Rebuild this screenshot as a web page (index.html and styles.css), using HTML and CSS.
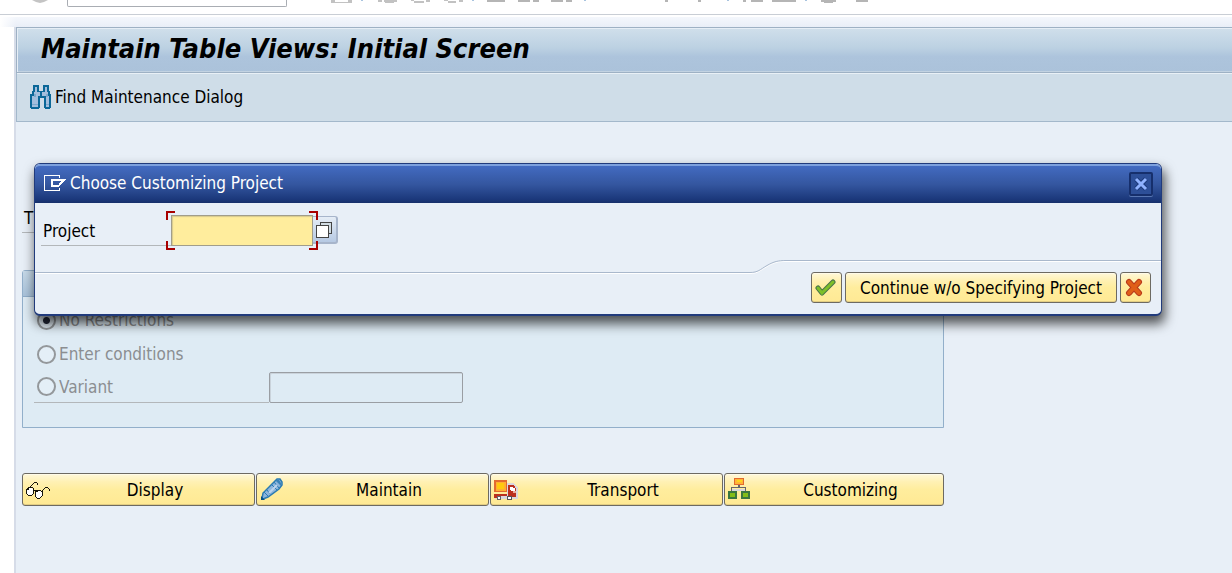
FILE: index.html
```html
<!DOCTYPE html>
<html lang="en">
<head>
<meta charset="utf-8">
<title>Maintain Table Views: Initial Screen</title>
<link rel="stylesheet" href="styles.css">
</head>
<body>
<header class="system-bar">
  <svg class="system-bar-ok" width="16" height="3" viewBox="0 0 16 3" aria-hidden="true"><path d="M0 0h16l-4 2-4 1-4-1z" fill="#c4c4c4"/></svg>
  <input class="command-field" type="text" aria-label="Command">
  <svg class="system-bar-icons" width="540" height="4" viewBox="330 0 540 4" shape-rendering="crispEdges" aria-hidden="true">
    <path fill="#c2c2c2" d="M331 0h4v2h13v-2h4v3h-21zM378 0h4v2h-4zM384 0h13v2h-3v1h-9v-1h-1zM411 0h3v1h-3zM414 1h10v2h-10zM426 0h4v2h-4zM444 0h4v1h-4zM448 1h8v2h-8zM459 0h4v2h-4z"/>
    <path fill="#b5b5b5" d="M487 0h18v2h-18zM518 0h12v2h-12zM533 0h6v2h-6zM551 0h12v2h-12zM566 0h6v2h-6zM665 0h3v2h-3zM698 0h3v2h-3zM743 0h3v2h-3zM751 0h12v2h-12zM772 0h24v2h-24zM821 0h15v2h-3v1h-9v-1h-3zM856 0h12v2h-12z"/>
    <path fill="#a9c4df" d="M361 0h2v1h-2zM472 0h2v1h-2zM584 0h2v1h-2zM727 0h2v1h-2zM805 0h2v1h-2z"/>
  </svg>
</header>
<div class="frame-edge"></div>
<main class="window">
  <h1 class="title">Maintain Table Views: Initial Screen</h1>
  <div class="toolbar">
    <button class="tool" type="button">
      <svg width="22" height="24" viewBox="0 0 22 24" shape-rendering="crispEdges" aria-hidden="true">
        <path d="M3 0h6v6h4V0h6v6h1v3h1v14h-1v1h-5v-1h-1V13h-4v10H9v1H1v-1H0V9h2V6h1z" fill="#0b6798"/>
        <path d="M5 2h2v5h3v4H8v11H2V11h2V7h1zM15 2h2v5h1v4h1v11h-3V11h-4V7h3z" fill="#a3bedd"/>
        <path d="M4 9h2v3H4zM2 19h6v1H2zM16 9h2v3h-2zM16 19h3v1h-3z" fill="#7ba8cd"/>
      </svg>
      Find Maintenance Dialog
    </button>
  </div>
  <div class="content">
    <div class="table-row">T</div>
    <section class="group">
      <div class="group-head"></div>
      <div class="group-body">
        <div class="option"><input class="radio" id="r1" type="radio" name="restrict" checked disabled><label for="r1">No Restrictions</label></div>
        <div class="option"><input class="radio" id="r2" type="radio" name="restrict" disabled><label for="r2">Enter conditions</label></div>
        <div class="option">
          <div class="option-line"><input class="radio" id="r3" type="radio" name="restrict" disabled><label for="r3">Variant</label></div>
          <input class="variant-field" type="text" aria-label="Variant" disabled>
        </div>
      </div>
    </section>
    <div class="actions">
      <button class="btn action" type="button">
        <svg width="26" height="24" viewBox="0 0 26 24" shape-rendering="crispEdges" aria-hidden="true">
          <path d="M3 10h4v1h1v5H7v1H3v-1H2v-5h1zM11 13h5v1h1v4h-1v1h-1v1h-3v-1h-1z" fill="#fff"/>
          <path fill="#17150c" d="M9 4h3v1H9zM8 5h1v1H8zM12 5h1v2h-1zM7 6h1v1H7zM6 7h1v1H6zM5 8h1v1H5zM3 9h5v1H3zM2 10h1v1H2zM1 11h1v5H1zM2 16h1v1H2zM3 17h4v1H3zM7 16h1v1H7zM8 10h1v6H8zM9 12h2v1H9zM10 13h1v6h-1zM11 12h5v1h-5zM16 13h1v1h-1zM17 14h1v4h-1zM16 18h1v1h-1zM15 19h1v1h-1zM12 20h3v1h-3zM11 19h1v1h-1zM17 12h1v2h-1zM18 11h1v1h-1zM19 10h1v1h-1zM20 9h3v1h-3zM23 10h1v1h-1zM24 11h1v2h-1zM2 10h2v2H2zM11 13h2v1h-2z"/>
        </svg>
        <span>Display</span>
      </button>
      <button class="btn action" type="button">
        <svg width="26" height="24" viewBox="0 0 26 24" aria-hidden="true">
          <path d="M3 21l1-6L15 4l3-3h3l2 3v3l-3 4-11 8-5 2z" fill="#8db5dc" stroke="#2b7bb2" stroke-width="1.500"/>
          <path d="M17 2h3l2 3v3l-5-5z" fill="#3a82b8"/><path d="M15 4l5 6M13 7l5 5M5 14l4 4M8 12l3 4" fill="none" stroke="#2b7bb2"/><path d="M10 15l8-8" stroke="#bcd4ec" stroke-width="2"/><path d="M2 18l4 4H2z" fill="#075287"/>
        </svg>
        <span>Maintain</span>
      </button>
      <button class="btn action" type="button">
        <svg width="26" height="24" viewBox="0 0 26 24" shape-rendering="crispEdges" aria-hidden="true">
          <path d="M14 5h7l4 5v11H14zM2 18h22v3H2z" fill="#d9d7dc"/>
          <path d="M1 2h13v12H1z" fill="#e2692e"/><path d="M3 4h10v9H3z" fill="#ffad31"/><path d="M4 5h7v6H4z" fill="#ffc80e"/>
          <path d="M1 16h13v2H1zM1 18h3v2H1zM15 7h6v1h1v2h1v9h-8z" fill="#bb301e"/>
          <path d="M17 9h3v1h2v3h-4v-1h-1z" fill="#fff"/><path d="M20 13h3v2h-3z" fill="#e8a99b"/>
          <circle cx="6" cy="20" r="2" fill="#fff" stroke="#66646a"/><circle cx="16.500" cy="20" r="2" fill="#fff" stroke="#55535b"/>
        </svg>
        <span>Transport</span>
      </button>
      <button class="btn action" type="button">
        <svg width="26" height="24" viewBox="0 0 26 24" shape-rendering="crispEdges" aria-hidden="true">
          <path d="M5 11h14v2H5z" fill="#d9d7dc"/><path d="M11 7h2v2h6v4h-1v-3H5v3H4v-4h7z" fill="#66656b"/>
          <path d="M7 0h10v7H7z" fill="#e2692e"/><path d="M8 1h8v5H8z" fill="#ffb536"/><path d="M10 2h5v2h-5z" fill="#ffd51a"/>
          <path d="M1 13h9v8H1zM14 13h9v8h-9z" fill="#39763f"/><path d="M3 15h5v4H3zM16 15h5v4h-5z" fill="#82bc18"/>
        </svg>
        <span>Customizing</span>
      </button>
    </div>
  </div>
</main>

<div class="dialog" role="dialog" aria-labelledby="dialog-title">
  <div class="dialog-head">
    <svg width="24" height="18" viewBox="0 0 24 18" shape-rendering="crispEdges" fill="#fff" aria-hidden="true">
      <path d="M1 1h16v3h-1V2H2v14h14v-2h1v3H1z"/>
      <path d="M8 5h15v1h-1v1h-1v1h-1v1h-1v1h-1v1h-1v1h-1v1H8zM10 7v4h6V9h1V8h1V7z" fill-rule="evenodd"/>
    </svg>
    <h2 class="dialog-title" id="dialog-title">Choose Customizing Project</h2>
    <button class="close" type="button" aria-label="Close">
      <svg width="14" height="14" viewBox="0 0 14 14" aria-hidden="true"><path d="M2 2l10 10M12 2L2 12" stroke="#1c3a7c" stroke-width="5"/><path d="M2 2l10 10M12 2L2 12" stroke="#8fb2ff" stroke-width="3"/></svg>
    </button>
  </div>
  <div class="project-row">
    <label class="project-label" for="project">Project</label>
    <div class="project-field">
      <input class="project-input" id="project" type="text">
      <i class="corner tl"></i><i class="corner tr"></i><i class="corner bl"></i><i class="corner br"></i>
    </div>
    <button class="help" type="button" aria-label="Search help">
      <svg width="18" height="18" viewBox="0 0 18 18" shape-rendering="crispEdges" stroke="#444" aria-hidden="true"><path d="M5.500 1.500h11v11h-11z" fill="#d1dce3"/><path d="M1.500 4.500h12v12h-12z" fill="#fff"/></svg>
    </button>
  </div>
  <div class="divider">
    <span class="divider-low"></span>
    <svg class="divider-curve" width="36" height="14" viewBox="0 0 36 14" fill="none" aria-hidden="true"><path d="M0 13.500c8 0 10-3 17-7S28 1.500 36 1.500" stroke="#fff"/><path d="M0 12.500c8 0 10-3 17-7S28 .5 36 .5" stroke="#a9b8cc"/></svg>
    <span class="divider-high"></span>
  </div>
  <div class="dialog-actions">
    <button class="btn square" type="button" aria-label="Continue">
      <svg width="22" height="20" viewBox="0 0 22 20" aria-hidden="true"><path d="M3 10l4 5L18 4" fill="none" stroke="#47734a" stroke-width="5" stroke-linecap="round" stroke-linejoin="round"/><path d="M3 10l4 5L18 4" fill="none" stroke="#7dbf29" stroke-width="3" stroke-linecap="round"/></svg>
    </button>
    <button class="btn wide" type="button">Continue w/o Specifying Project</button>
    <button class="btn square" type="button" aria-label="Cancel">
      <svg width="20" height="20" viewBox="0 0 20 20" aria-hidden="true"><path d="M5 4l10 11M15 4L5 15" stroke="#b93a1d" stroke-width="6" stroke-linecap="round"/><path d="M5 4l10 11M15 4L5 15" stroke="#e05f18" stroke-width="4" stroke-linecap="round"/></svg>
    </button>
  </div>
</div>
</body>
</html>
```

FILE: styles.css
```css
* { box-sizing: border-box; }

body {
  margin: 0;
  min-height: 100vh;
  display: flex;
  flex-direction: column;
  position: relative;
  overflow: hidden;
  background: #fff;
  color: #000;
  font: 17px/24px "DejaVu Sans Condensed", "DejaVu Sans", sans-serif;
  font-stretch: condensed;
}

button, input { font: inherit; color: inherit; }
button { padding: 0; border: 0; background: none; }
svg { flex: none; display: block; }

.system-bar {
  display: flex;
  align-items: flex-start;
  height: 15px;
  padding-left: 32px;
  border-bottom: 1px solid #c9ced5;
}
.command-field {
  width: 220px;
  height: 7px;
  margin: 0 43px 0 19px;
  padding: 0;
  border: solid #a9adb3;
  border-width: 0 1px 1px;
  border-radius: 0 0 2px 2px;
}

.frame-edge {
  height: 12px;
  border-top: 2px solid #fff;
  background: linear-gradient(90deg, #fff, transparent 16px), linear-gradient(#f4f7fc, #e9eef7);
}

.window {
  flex: 1;
  margin-left: 14px;
  border-left: 2px solid #d6dce8;
  background: #e8eff7;
}
.title {
  height: 46px;
  margin: 0;
  padding: 0 24px;
  border: 1px solid #9eb1c4;
  border-right: 0;
  box-shadow: inset 1px 1px #e6eef6, inset 0 -1px #c3d3e2;
  background: linear-gradient(#d0dfeb, #bcd1e2 45%, #adc4dc 65%, #abc2da);
  font-size: 27px;
  line-height: 42px;
  font-style: italic;
  white-space: nowrap;
}
.toolbar {
  height: 49px;
  padding: 12px 13px;
  border: solid #a3b8cb;
  border-width: 0 0 1px 1px;
  box-shadow: inset 0 1px #e9f0f6;
  background: #cfdde8;
}
.tool { display: flex; gap: 3px; align-items: center; }

.content { padding: 84px 0 0 6px; }
.table-row {
  width: 240px;
  height: 27px;
  padding-left: 2px;
  border-bottom: 1px solid #b3b7ba;
}
.group {
  max-width: 922px;
  margin-top: 37px;
  border: 1px solid #92afca;
  border-radius: 3px 3px 0 0;
  background: #deebf4;
}
.group-head {
  height: 26px;
  border-bottom: 1px solid #8fadc9;
  background: linear-gradient(#c6d9e8, #a9c2da);
}
.group-body { padding: 6px 11px 24px; color: #8b8e91; }
.option { display: flex; align-items: center; height: 34px; padding-left: 3px; }
.option:last-child { align-items: stretch; height: 32px; padding: 0; }
.option-line {
  display: flex;
  align-items: center;
  width: 235px;
  padding-left: 3px;
  border-bottom: 1px solid #b3b7ba;
}
.radio {
  appearance: none;
  width: 19px;
  height: 19px;
  margin: 0 3px 0 0;
  border: 2px solid #94989b;
  border-radius: 50%;
  background: #e4eff7;
}
.radio:checked { background: radial-gradient(circle, #252a3b 3px, #e4eff7 4px); }
.variant-field {
  width: 194px;
  margin-top: 1px;
  border: 1px solid #9a9ea3;
  border-radius: 2px;
  background: #deebf4;
  box-shadow: inset 1px 1px #cad3db;
}

.actions {
  display: grid;
  grid-template-columns: 233fr 233fr 233fr 220fr;
  gap: 1px;
  max-width: 922px;
  margin-top: 45px;
}
.btn {
  height: 31px;
  border: 1px solid #6d6a62;
  border-radius: 3px;
  background: linear-gradient(#fff8da, #fff1b4 25%, #ffed9d 50%, #ffe994);
  box-shadow: inset 0 1px #fffbe8, inset 0 -1px #e2cd83;
}
.action { display: flex; align-items: center; height: 33px; padding-left: 2px; }
.action span { flex: 1; padding-left: 5px; }

.dialog {
  position: absolute;
  top: 163px;
  left: 34px;
  right: 70px;
  padding-bottom: 11px;
  border: solid #213b7c;
  border-width: 1px 1px 2px 1px;
  border-radius: 6px;
  background: #e8eff7;
  box-shadow: 2px 7px 12px 1px rgba(0, 0, 0, 0.65);
}
.dialog-head {
  display: flex;
  align-items: center;
  gap: 3px;
  height: 39px;
  padding: 0 8px 4px;
  border-top: 2px solid #7da0dd;
  border-radius: 5px 5px 0 0;
  background: linear-gradient(#436bc1, #34569f 50%, #1b387b 90%, #162f6a);
  color: #fff;
}
.dialog-title { flex: 1; margin: 0; font-size: 17px; font-weight: normal; }
.close {
  display: grid;
  place-items: center;
  width: 24px;
  height: 24px;
  margin-top: 3px;
  border: 2px solid #162f6c;
  border-radius: 2px;
  background: #2d4f98;
  box-shadow: 0 1px #5876b2;
}
.project-row { display: flex; align-items: flex-start; padding: 12px 6px 14px; }
.project-label {
  width: 130px;
  height: 31px;
  padding: 4px 2px 0;
  border-bottom: 1px solid #b3b7ba;
}
.project-field { position: relative; width: 142px; height: 31px; }
.project-input {
  display: block;
  width: 100%;
  height: 100%;
  padding: 0 4px;
  border: 1px solid #a19d8b;
  background: #ffed9d;
  box-shadow: inset 1px 1px 1px #d6c98f;
}
.corner { position: absolute; width: 9px; height: 9px; border: 0 solid #a80000; }
.tl { top: -4px; left: -5px; border-width: 2px 0 0 2px; }
.tr { top: -4px; right: -5px; border-width: 2px 2px 0 0; }
.bl { bottom: -4px; left: -5px; border-width: 0 0 2px 2px; }
.br { bottom: -4px; right: -5px; border-width: 0 2px 2px 0; }
.help {
  display: grid;
  place-items: center start;
  width: 25px;
  height: 28px;
  padding-left: 2px;
  margin-top: 1px;
  border: solid #a7b5cb;
  border-width: 1px 2px 2px 0;
  border-radius: 0 3px 3px 0;
  background: linear-gradient(#e5edf6, #b6c9e3);
}
.divider { display: flex; height: 12px; }
.divider-low { flex: 1; box-shadow: 0 1px #a9b8cc, 0 2px #fff; }
.divider-high { width: 375px; border-top: 1px solid #a9b8cc; box-shadow: inset 0 1px #fff; }
.dialog-actions { display: flex; justify-content: flex-end; gap: 3px; padding-right: 10px; }
.square { display: grid; place-items: center start; width: 31px; padding-left: 3px; }
.wide { padding: 0 9px; min-width: 272px; }
```
